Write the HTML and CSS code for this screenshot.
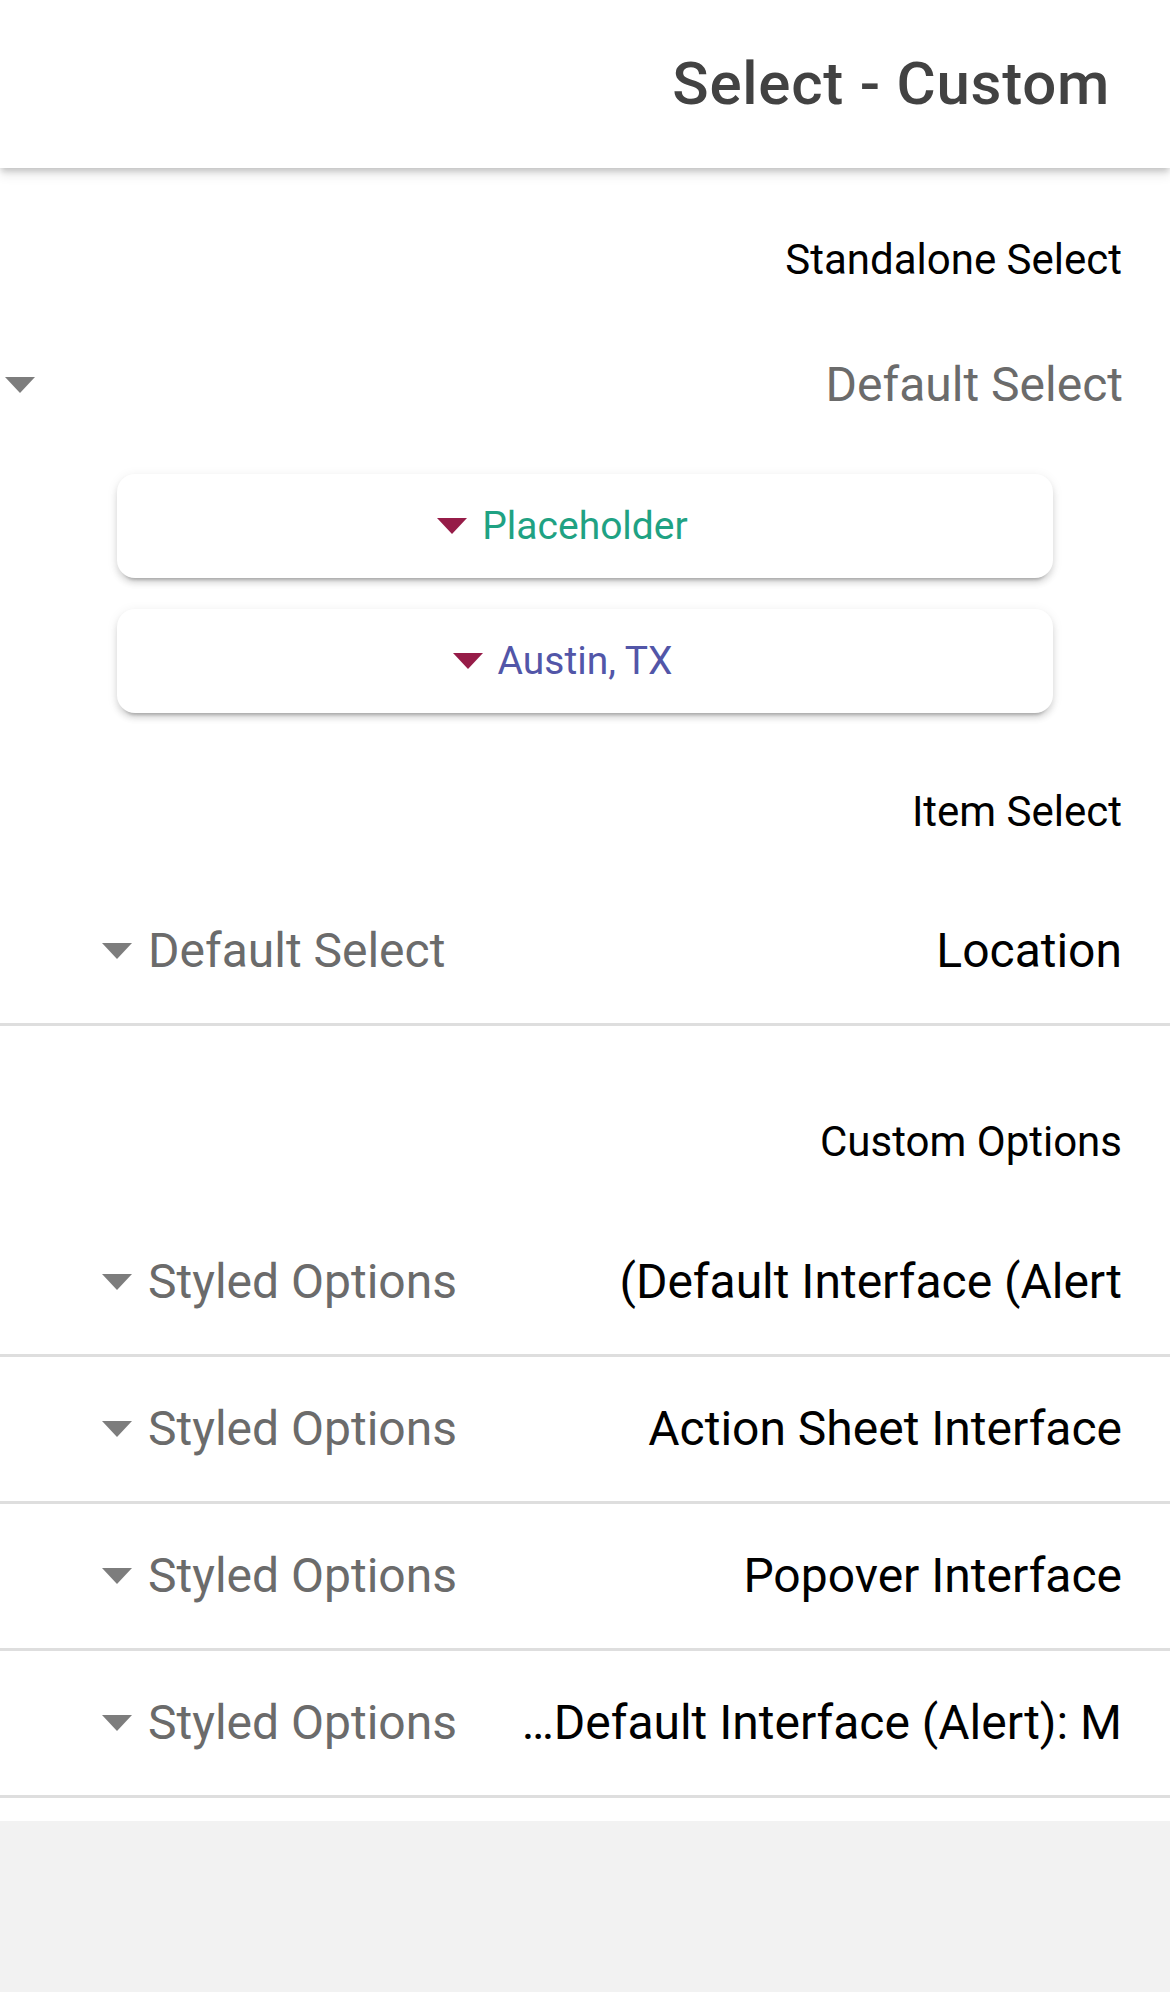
FILE: index.html
```html
<!DOCTYPE html>
<html lang="en" dir="rtl">
<head>
<meta charset="utf-8">
<title>Select - Custom</title>
<link rel="stylesheet" href="styles.css">
</head>
<body>
<header class="toolbar">
  <h1 class="title">Select - Custom</h1>
</header>
<main class="content">
  <section class="standalone">
    <div class="list-header first-header">Standalone Select</div>
    <div class="select-standalone">
      <span class="select-text">Default Select</span>
      <span class="arrow arrow-gray"></span>
    </div>
    <div class="card-select">
      <span class="card-text text-green">Placeholder</span>
      <span class="arrow arrow-maroon card-arrow"></span>
    </div>
    <div class="card-select card-second">
      <span class="card-text text-indigo">Austin, TX</span>
      <span class="arrow arrow-maroon card-arrow"></span>
    </div>
  </section>

  <section class="list">
    <div class="list-header item-header">Item Select</div>
    <div class="item">
      <span class="item-label">Location</span>
      <span class="item-select"><span>Default Select</span><span class="arrow arrow-gray"></span></span>
    </div>
  </section>

  <section class="list">
    <div class="list-header custom-header">Custom Options</div>
    <div class="item">
      <span class="item-label">Default Interface (Alert<span dir="rtl">)</span></span>
      <span class="item-select"><span>Styled Options</span><span class="arrow arrow-gray"></span></span>
    </div>
    <div class="item">
      <span class="item-label">Action Sheet Interface</span>
      <span class="item-select"><span>Styled Options</span><span class="arrow arrow-gray"></span></span>
    </div>
    <div class="item">
      <span class="item-label">Popover Interface</span>
      <span class="item-select"><span>Styled Options</span><span class="arrow arrow-gray"></span></span>
    </div>
    <div class="item">
      <span class="item-label item-label-ltr" dir="ltr">…Default Interface (Alert): M</span>
      <span class="item-select"><span>Styled Options</span><span class="arrow arrow-gray"></span></span>
    </div>
  </section>
</main>
</body>
</html>
```
FILE: styles.css
```css
* {
  box-sizing: border-box;
  margin: 0;
  padding: 0;
}

html {
  background: #f2f2f2;
}

body {
  margin: 0;
  font-family: Roboto, "Noto Sans", sans-serif;
  background: #f2f2f2;
  color: #000;
}

.toolbar {
  position: relative;
  z-index: 2;
  height: 168px;
  background: #fff;
  display: flex;
  align-items: center;
  padding: 0 60px;
  box-shadow: 0 4px 6px -1px rgba(0, 0, 0, 0.18), 0 8px 10px 0 rgba(0, 0, 0, 0.08);
}

.title {
  font-size: 60px;
  font-weight: 500;
  line-height: 70px;
  letter-spacing: 0.75px;
  color: #424242;
}

.content {
  background: #fff;
  padding-bottom: 23px;
}

.list-header {
  font-size: 42px;
  line-height: 49px;
  padding-right: 48px;
  color: #000;
}

.first-header {
  padding-top: 67px;
}

.select-standalone {
  margin-top: 73px;
  height: 56px;
  display: flex;
  align-items: center;
  padding: 0 47px 0 5px;
}

.select-text {
  flex: 1;
  font-size: 48px;
  line-height: 56px;
  color: #6b6b6b;
}

.arrow {
  display: block;
  width: 0;
  height: 0;
  border-top: 16px solid #7d7d7d;
  border-left: 15px solid transparent;
  border-right: 15px solid transparent;
}

.arrow-maroon {
  border-top-color: #961c48;
}

.card-select {
  margin: 61px 117px 0;
  height: 104px;
  border-radius: 18px;
  background: #fff;
  box-shadow: 0 8px 3px -6px rgba(0, 0, 0, 0.2), 0 5px 6px 0 rgba(0, 0, 0, 0.12), 0 2px 12px 0 rgba(0, 0, 0, 0.08);
  display: grid;
  grid-template-columns: 1fr auto 1fr;
  align-items: center;
}

.card-second {
  margin-top: 31px;
}

.card-text {
  grid-column: 2;
  grid-row: 1;
  font-size: 39px;
  line-height: 46px;
}

.card-arrow {
  grid-column: 3;
  grid-row: 1;
  justify-self: start;
  margin-right: 15px;
}

.text-green {
  color: #1fa283;
}

.text-indigo {
  color: #5256a8;
}

.item-header {
  margin-top: 74px;
  margin-bottom: 43px;
}

.custom-header {
  margin-top: 91px;
  margin-bottom: 44px;
}

.item {
  height: 147px;
  border-bottom: 3px solid #dedede;
  display: flex;
  align-items: center;
  padding: 0 48px 0 102px;
}

.item-label {
  flex: 1;
  min-width: 0;
  font-size: 48px;
  line-height: 56px;
  white-space: nowrap;
  overflow: hidden;
  text-overflow: ellipsis;
}

.item-label-ltr {
  text-align: right;
}

.item-select {
  display: flex;
  align-items: center;
  gap: 16px;
  margin-right: 56px;
  font-size: 48px;
  line-height: 56px;
  color: #6b6b6b;
}
```
